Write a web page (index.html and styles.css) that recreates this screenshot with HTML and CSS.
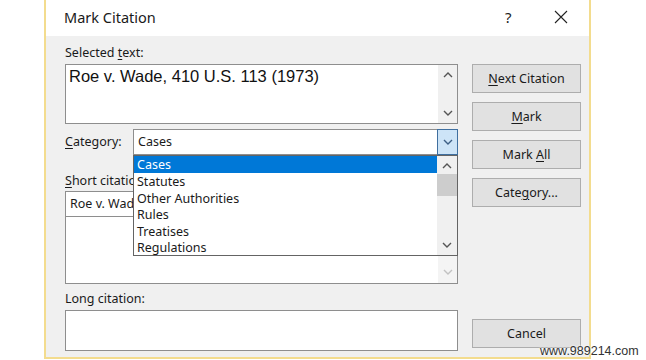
FILE: index.html
```html
<!DOCTYPE html>
<html>
<head>
<meta charset="utf-8">
<link rel="stylesheet" href="styles.css">
</head>
<body>
<div class="window">
  <div class="titlebar">
    <span class="title">Mark Citation</span>
    <span class="help">?</span>
    <span class="close"><svg width="14" height="14" viewBox="0 0 14 14"><path d="M1 1 L13 13 M13 1 L1 13" stroke="#222" stroke-width="1.1" fill="none"/></svg></span>
  </div>
  <div class="content">
    <div class="leftcol">
      <div class="label lab-sel">Selected <u>t</u>ext:</div>
      <div class="selbox">
        <div class="seltext">Roe v. Wade, 410 U.S. 113 (1973)</div>
        <div class="vscroll">
          <svg width="10" height="6" viewBox="0 0 10 6"><path d="M1 5 L5 1 L9 5" stroke="#555" stroke-width="1.4" fill="none"/></svg>
          <svg width="10" height="6" viewBox="0 0 10 6"><path d="M1 1 L5 5 L9 1" stroke="#555" stroke-width="1.4" fill="none"/></svg>
        </div>
      </div>
      <div class="catrow">
        <div class="label"><u>C</u>ategory:</div>
        <div class="combo">
          <div class="combotext">Cases</div>
          <div class="combobtn"><svg width="10" height="6" viewBox="0 0 10 6"><path d="M1 1 L5 5 L9 1" stroke="#3d5f85" stroke-width="1.4" fill="none"/></svg></div>
        </div>
      </div>
      <div class="label lab-short"><span class="clip"><u>S</u>hort citation:</span></div>
      <div class="shortinput"><span class="clip2">Roe v. Wade</span></div>
      <div class="shortlist">
        <div class="listarea"></div>
        <div class="vscroll disabled">
          <span></span>
          <svg width="10" height="6" viewBox="0 0 10 6"><path d="M1 1 L5 5 L9 1" stroke="#c2c2c2" stroke-width="1.4" fill="none"/></svg>
        </div>
      </div>
      <div class="label lab-long">Long citation:</div>
      <div class="longbox"></div>

      <div class="droplist">
        <div class="items">
          <div class="item sel">Cases</div>
          <div class="item">Statutes</div>
          <div class="item">Other Authorities</div>
          <div class="item">Rules</div>
          <div class="item">Treatises</div>
          <div class="item">Regulations</div>
        </div>
        <div class="dscroll">
          <svg width="10" height="6" viewBox="0 0 10 6"><path d="M1 5 L5 1 L9 5" stroke="#555" stroke-width="1.4" fill="none"/></svg>
          <div class="thumb"></div>
          <div class="spacer"></div>
          <svg width="10" height="6" viewBox="0 0 10 6"><path d="M1 1 L5 5 L9 1" stroke="#555" stroke-width="1.4" fill="none"/></svg>
        </div>
      </div>
    </div>
    <div class="rightcol">
      <div class="btn"><u>N</u>ext Citation</div>
      <div class="btn"><u>M</u>ark</div>
      <div class="btn">Mark <u>A</u>ll</div>
      <div class="btn">Cate<u>g</u>ory...</div>
      <div class="grow"></div>
      <div class="btn">Cancel</div>
    </div>
  </div>
</div>
<div class="watermark">www.989214.com</div>
</body>
</html>
```

FILE: styles.css
```css
* { box-sizing: border-box; }
html, body { margin: 0; padding: 0; background: #ffffff; }
body { width: 646px; height: 360px; overflow: hidden; position: relative; font-family: "Noto Sans", "Open Sans", sans-serif; color: #1a1a1a; }
u { text-decoration: underline; text-underline-offset: 2px; text-decoration-thickness: 1px; }

.window {
  margin-left: 44px;
  width: 547px;
  height: 359px;
  border-left: 2px solid #f3dc8e;
  border-right: 2px solid #f3dc8e;
  border-bottom: 2px solid #f3dc8e;
  background: #f0f0f0;
  display: flex;
  flex-direction: column;
}
.titlebar {
  height: 36px;
  background: #ffffff;
  display: flex;
  align-items: center;
  padding-left: 18px;
  flex: none;
}
.title { font-size: 14.5px; color: #1a1a1a; flex: 1; padding-bottom: 2px; }
.help { font-size: 15px; width: 18px; margin-right: 31px; color: #222; padding-bottom: 2px; }
.close { width: 14px; height: 14px; margin-right: 21px; display: flex; margin-top: -2px; }

.content {
  flex: 1;
  display: flex;
  padding: 9px 0 0 19px;
}
.leftcol {
  width: 393px;
  position: relative;
  display: flex;
  flex-direction: column;
}
.label { font-size: 12.5px; line-height: 16px; color: #1a1a1a; }
.lab-sel { margin-bottom: 3px; }

.selbox {
  height: 60px;
  background: #fff;
  border: 1px solid #8e8e8e;
  display: flex;
}
.seltext {
  flex: 1;
  font-family: "Liberation Sans", Arial, sans-serif;
  font-size: 16.5px;
  padding: 1px 0 0 3px;
  line-height: 20px;
  color: #111;
}
.vscroll {
  width: 19px;
  background: #f0f0f0;
  display: flex;
  flex-direction: column;
  justify-content: space-between;
  align-items: center;
  padding: 7px 0 7px;
}
.vscroll.disabled { background: #f4f4f4; }

.catrow {
  margin-top: 5px;
  height: 26px;
  display: flex;
  align-items: center;
}
.catrow .label { width: 68px; }
.combo {
  width: 325px;
  height: 26px;
  background: #fff;
  border: 1px solid #8e8e8e;
  display: flex;
}
.combotext { flex: 1; font-size: 12.5px; line-height: 24px; padding-left: 4px; }
.combobtn {
  width: 21px;
  height: 26px;
  margin: -1px -1px 0 0;
  background: #cde4f7;
  border: 1px solid #3f6f9f;
  display: flex;
  align-items: center;
  justify-content: center;
}

.lab-short { margin-top: 18px; }
.clip { display: block; width: 68px; overflow: hidden; white-space: nowrap; }
.clip2 { display: block; width: 63px; overflow: hidden; white-space: nowrap; }
.shortinput {
  margin-top: 2px;
  height: 26px;
  background: #fff;
  border: 1px solid #8e8e8e;
  font-size: 12.5px;
  line-height: 24px;
  padding-left: 4px;
}
.shortlist {
  height: 68px;
  margin-top: -1px;
  background: #fff;
  border: 1px solid #8e8e8e;
  display: flex;
}
.listarea { flex: 1; }
.shortlist .vscroll { padding-bottom: 8px; }

.lab-long { margin-top: 7px; }
.longbox {
  margin-top: 3px;
  height: 41px;
  background: #fff;
  border: 1px solid #8e8e8e;
}

.droplist {
  position: absolute;
  left: 68px;
  top: 110px;
  width: 325px;
  height: 101px;
  background: #fff;
  border: 1px solid #646464;
  display: flex;
}
.items { flex: 1; }
.item {
  height: 16.5px;
  font-size: 12.5px;
  line-height: 16.5px;
  padding: 1px 0 0 3px;
  color: #1a1a1a;
}
.item.sel { background: #0078d7; color: #fff; height: 17px; }
.dscroll {
  width: 20px;
  background: #f0f0f0;
  display: flex;
  flex-direction: column;
  align-items: center;
  padding: 7px 0 7px;
}
.thumb { width: 20px; height: 22px; background: #cdcdcd; margin-top: 5px; }
.spacer { flex: 1; }

.rightcol {
  width: 109px;
  margin-left: 14px;
  display: flex;
  flex-direction: column;
  padding-top: 19px;
  padding-bottom: 9px;
}
.btn {
  height: 29px;
  margin-bottom: 9px;
  background: #e1e1e1;
  border: 1px solid #adadad;
  font-size: 12.5px;
  line-height: 27px;
  text-align: center;
  color: #1a1a1a;
  flex: none;
}
.rightcol .btn:last-child { margin-bottom: 0; }
.grow { flex: 1; }

.watermark {
  position: absolute;
  left: 540px;
  top: 344px;
  font-family: "Liberation Sans", Arial, sans-serif;
  font-size: 12.5px;
  color: #333;
  text-shadow: 0 0 2px #fff, 0 0 2px #fff;
}
```
